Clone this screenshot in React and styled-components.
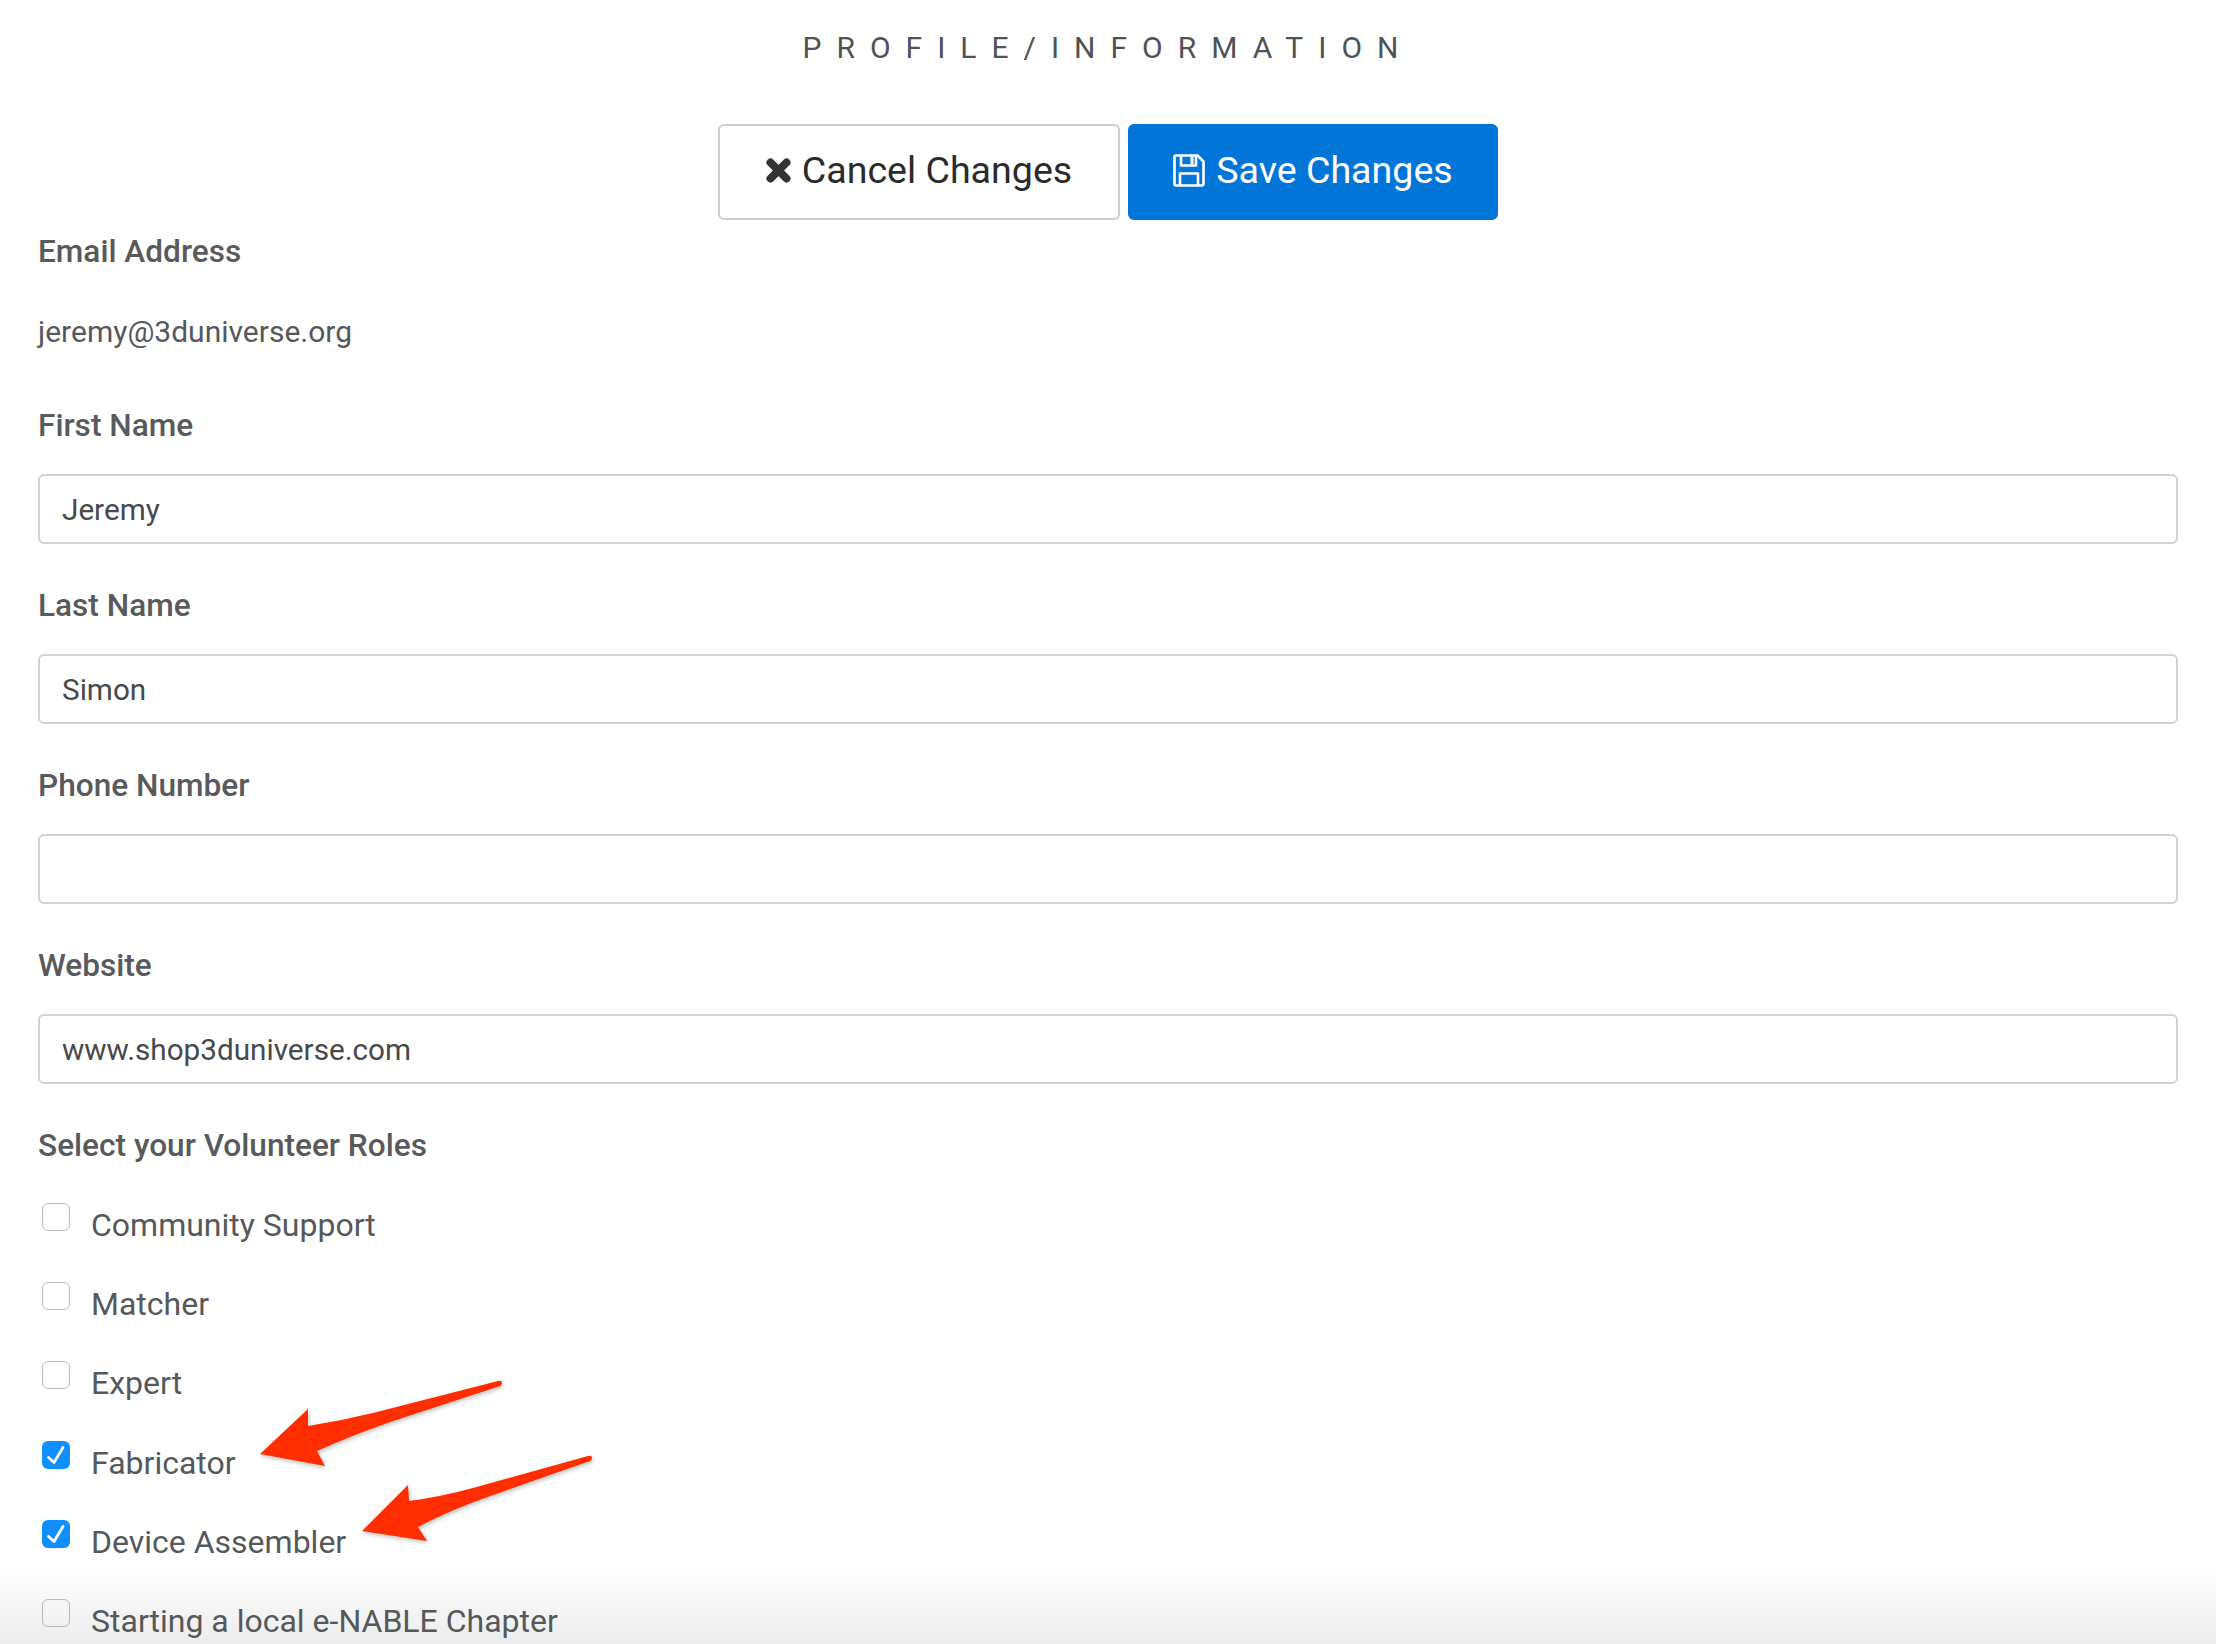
import React from "react";
import styled, { createGlobalStyle } from "styled-components";

const GlobalStyle = createGlobalStyle`
  html, body {
    margin: 0;
    padding: 0;
    height: 1644px;
    overflow: hidden;
    background: #fff;
  }
  * {
    box-sizing: border-box;
  }
`;

const Page = styled.div`
  position: relative;
  height: 1644px;
  overflow: hidden;
  padding: 25px 38px 0 38px;
  font-family: Roboto, "Liberation Sans", sans-serif;
  color: #55595c;
  background: linear-gradient(to bottom, #fff 0, #fff 1566px, #ececec 1644px);
`;

const Title = styled.h1`
  margin: 0 0 55px 0;
  height: 44px;
  line-height: 45px;
  text-align: center;
  font-size: 30px;
  font-weight: 400;
  letter-spacing: 15px;
  color: #505356;
`;

const Toolbar = styled.div`
  display: flex;
  justify-content: center;
  gap: 8px;
  margin-bottom: 8px;
`;

const Button = styled.button`
  height: 96px;
  width: ${(p) => p.$width}px;
  display: flex;
  align-items: center;
  justify-content: center;
  gap: 11px;
  padding: 0 0 4px 0;
  font-family: inherit;
  font-size: 37.6px;
  border-radius: 6px;
  border: 2px solid ${(p) => (p.$primary ? "#0275d8" : "#ccc")};
  background: ${(p) => (p.$primary ? "#0275d8" : "#fff")};
  color: ${(p) => (p.$primary ? "#fff" : "#292b2c")};
`;

const Field = styled.div`
  margin-bottom: 38px;
`;

const Label = styled.div`
  height: 44px;
  line-height: 47px;
  font-size: 31.6px;
  font-weight: 500;
  color: #585a5c;
  margin-bottom: ${(p) => p.$gap}px;
`;

const StaticValue = styled.div`
  height: 44px;
  line-height: 46px;
  font-size: 30px;
  margin-bottom: 49px;
`;

const TextInput = styled.input`
  display: block;
  width: 100%;
  height: 70px;
  padding: 0 22px;
  font-family: inherit;
  font-size: 29.7px;
  color: #464a4c;
  background: #fff;
  border: 2px solid #d2d2d2;
  border-radius: 6px;
  outline: none;
`;

const RoleRow = styled.label`
  display: flex;
  align-items: flex-start;
  height: 79.2px;
  padding-left: 4px;
  font-size: 32px;
  line-height: 46px;
`;

const Box = styled.span`
  flex: none;
  display: flex;
  width: 28px;
  height: 28px;
  margin-top: 1px;
  margin-right: 21px;
  border-radius: 6px;
  border: ${(p) => (p.$checked ? "none" : "1.5px solid #b9b9b9")};
  background: ${(p) => (p.$checked ? "#0f8fff" : "transparent")};
`;

const ArrowLayer = styled.svg`
  position: absolute;
  left: 0;
  top: 0;
  width: 2216px;
  height: 1644px;
  pointer-events: none;
  filter: drop-shadow(1px 2px 2px rgba(0, 0, 0, 0.25));
`;

const roles = [
  { name: "Community Support", checked: false },
  { name: "Matcher", checked: false },
  { name: "Expert", checked: false },
  { name: "Fabricator", checked: true },
  { name: "Device Assembler", checked: true },
  { name: "Starting a local e-NABLE Chapter", checked: false },
];

const fields = [
  { label: "First Name", value: "Jeremy" },
  { label: "Last Name", value: "Simon" },
  { label: "Phone Number", value: "" },
  { label: "Website", value: "www.shop3duniverse.com" },
];

const CloseIcon = () => (
  <svg width="25" height="25" viewBox="0 0 25 25">
    <path d="M4.5 4.5 L20.5 20.5 M20.5 4.5 L4.5 20.5" fill="none" stroke="#333" strokeWidth="8" strokeLinecap="round" />
  </svg>
);

const SaveIcon = () => (
  <svg width="32" height="33" viewBox="0 0 32 33">
    <g fill="none" stroke="#fff" strokeWidth="2.6" strokeLinejoin="round">
      <path d="M3 1.5 H24.5 L30.5 7.5 V29.5 Q30.5 31.5 28.5 31.5 H3 Q1.5 31.5 1.5 29.5 V3 Q1.5 1.5 3 1.5 Z" />
      <path d="M8 1.5 V11.5 H23 V1.5" />
      <path d="M7 31.5 V19.5 H25 V31.5" />
    </g>
    <rect x="17.5" y="3" width="3" height="7" fill="#fff" />
  </svg>
);

const CheckIcon = () => (
  <svg width="28" height="28" viewBox="0 0 28 28">
    <path d="M6.5 16.5 L12 21.5 L21 6.5" fill="none" stroke="#fff" strokeWidth="2.8" strokeLinecap="round" strokeLinejoin="round" />
  </svg>
);

const App = () => {
  return (
    <Page>
      <GlobalStyle />
      <Title>PROFILE/INFORMATION</Title>
      <Toolbar>
        <Button $width={402}>
          <CloseIcon />
          Cancel Changes
        </Button>
        <Button $width={370} $primary>
          <SaveIcon />
          Save Changes
        </Button>
      </Toolbar>

      <Label $gap={37}>Email Address</Label>
      <StaticValue>jeremy@3duniverse.org</StaticValue>

      {fields.map((f) => (
        <Field key={f.label}>
          <Label $gap={28}>{f.label}</Label>
          <TextInput type="text" defaultValue={f.value} />
        </Field>
      ))}

      <Label $gap={36}>Select your Volunteer Roles</Label>
      <div>
        {roles.map((r) => (
          <RoleRow key={r.name}>
            <Box $checked={r.checked}>{r.checked && <CheckIcon />}</Box>
            {r.name}
          </RoleRow>
        ))}
      </div>

      <ArrowLayer viewBox="0 0 2216 1644">
        <path
          fill="#ff2d00"
          d="M260 1454 L308 1409 L308 1426 Q340 1421 373 1413 L498 1381 Q502 1380 502 1383 Q502 1386 497 1387 L390 1422 Q350 1436 317 1451 L325 1466 Z"
        />
        <path
          fill="#ff2d00"
          d="M362 1531 L408 1485 L409 1501 Q440 1497 473 1488 L588 1456 Q592 1455 592 1458 Q592 1461 587 1462 L493 1495 Q450 1510 418 1527 L427 1541 Z"
        />
      </ArrowLayer>
    </Page>
  );
};

export default App;
